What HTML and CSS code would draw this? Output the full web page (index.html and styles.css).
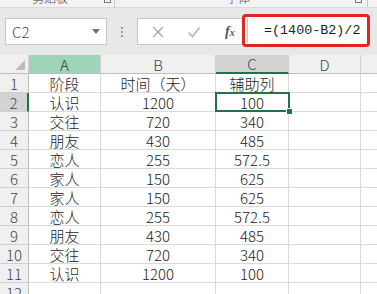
FILE: index.html
```html
<!DOCTYPE html>
<html lang="zh">
<head>
<meta charset="utf-8">
<title>Excel</title>
<link rel="stylesheet" href="styles.css">
</head>
<body>
<div class="ribbon">
  <span class="grp g1">剪贴板</span><span class="launch l1"></span><span class="sep s1"></span>
  <span class="grp g2">字体</span><span class="launch l2"></span><span class="sep s2"></span>
</div>
<div class="fbar">
  <div class="namebox"><span class="ref">C2</span><span class="tri"></span></div>
  <div class="dots"><i></i><i></i><i></i></div>
  <div class="tools">
    <svg class="ico" width="14" height="14" viewBox="0 0 14 14"><path d="M2 2 L12 12 M12 2 L2 12" stroke="#a8a8a8" stroke-width="1.4" fill="none"/></svg>
    <svg class="ico chk" width="14" height="14" viewBox="0 0 14 14"><path d="M1.5 7.5 L5.5 11.5 L12.5 2.5" stroke="#b4b4b4" stroke-width="1.6" fill="none"/></svg>
    <span class="fx"><i>f</i><i class="x">x</i></span>
  </div>
  <div class="input"><span class="formula">=(1400-B2)/2</span></div>
  <div class="rest"></div>
</div>
<div class="sheet">
  <div class="corner"><span class="selall"></span></div>
  <div class="ch hl-a">A</div><div class="ch">B</div><div class="ch sel">C</div><div class="ch">D</div><div class="ch last"></div>

  <div class="rh">1</div><div class="c">阶段</div><div class="c">时间（天）</div><div class="c">辅助列</div><div class="c"></div><div class="c last"></div>
  <div class="rh sel">2</div><div class="c">认识</div><div class="c">1200</div><div class="c">100</div><div class="c"></div><div class="c last"></div>
  <div class="rh">3</div><div class="c">交往</div><div class="c">720</div><div class="c">340</div><div class="c"></div><div class="c last"></div>
  <div class="rh">4</div><div class="c">朋友</div><div class="c">430</div><div class="c">485</div><div class="c"></div><div class="c last"></div>
  <div class="rh">5</div><div class="c">恋人</div><div class="c">255</div><div class="c">572.5</div><div class="c"></div><div class="c last"></div>
  <div class="rh">6</div><div class="c">家人</div><div class="c">150</div><div class="c">625</div><div class="c"></div><div class="c last"></div>
  <div class="rh">7</div><div class="c">家人</div><div class="c">150</div><div class="c">625</div><div class="c"></div><div class="c last"></div>
  <div class="rh">8</div><div class="c">恋人</div><div class="c">255</div><div class="c">572.5</div><div class="c"></div><div class="c last"></div>
  <div class="rh">9</div><div class="c">朋友</div><div class="c">430</div><div class="c">485</div><div class="c"></div><div class="c last"></div>
  <div class="rh">10</div><div class="c">交往</div><div class="c">720</div><div class="c">340</div><div class="c"></div><div class="c last"></div>
  <div class="rh">11</div><div class="c">认识</div><div class="c">1200</div><div class="c">100</div><div class="c"></div><div class="c last"></div>
  <div class="rh">12</div><div class="c"></div><div class="c"></div><div class="c"></div><div class="c"></div><div class="c last"></div>

  <div class="selbox"><span class="handle"></span></div>
</div>
</body>
</html>
```
FILE: styles.css
```css
html, body {
  margin: 0;
  padding: 0;
}
body {
  width: 377px;
  height: 294px;
  overflow: hidden;
  background: #ffffff;
  font-family: "Noto Sans CJK SC", "Noto Sans", sans-serif;
  font-weight: 300;
  color: #222;
}

/* ribbon remnant */
.ribbon {
  position: relative;
  height: 7px;
  background: #f3f3f3;
  border-bottom: 1px solid #dadada;
  overflow: hidden;
}
.grp {
  position: absolute;
  top: -10px;
  font-size: 12px;
  line-height: 16px;
  color: #444;
}
.g1 { left: 32px; }
.g2 { left: 226px; }
.launch {
  position: absolute;
  top: -4px;
  width: 5px;
  height: 6px;
  border: 1px solid #777;
  border-top: 0;
}
.l1 { left: 104px; }
.l2 { left: 355px; }
.sep {
  position: absolute;
  top: 0;
  width: 1px;
  height: 7px;
  background: #c8c8c8;
}
.s1 { left: 114px; }
.s2 { left: 367px; }

/* formula bar */
.fbar {
  height: 47px;
  background: #e8e8e8;
  display: flex;
  align-items: flex-start;
}
.namebox {
  margin: 10px 0 0 5px;
  width: 100px;
  height: 25px;
  background: #fff;
  border: 1px solid #c6c6c6;
  display: flex;
  align-items: center;
  justify-content: space-between;
}
.ref {
  margin-left: 6px;
  font-size: 15px;
  color: #444;
}
.tri {
  margin-right: 6px;
  width: 0;
  height: 0;
  border-left: 4px solid transparent;
  border-right: 4px solid transparent;
  border-top: 5px solid #707070;
}
.dots {
  width: 30px;
  margin-top: 19px;
  display: flex;
  flex-direction: column;
  align-items: center;
  gap: 2px;
}
.dots i {
  display: block;
  width: 2px;
  height: 2px;
  background: #a0a0a0;
}
.tools {
  margin-top: 10px;
  width: 104px;
  height: 25px;
  background: #fff;
  border: 1px solid #c6c6c6;
  border-right: 0;
  display: flex;
  align-items: center;
}
.ico { margin-left: 13px; }
.chk { margin-left: 22px; }
.fx {
  margin-left: 24px;
  font-family: "Liberation Serif", serif;
  color: #555;
  font-size: 14px;
  font-weight: bold;
}
.fx i { font-style: italic; }
.fx .x { font-size: 10px; }
.input {
  margin-top: 6px;
  width: 122px;
  height: 27px;
  background: #fff;
  border: 3px solid #e5231f;
  border-radius: 4px;
  display: flex;
  align-items: center;
  position: relative;
}
.input::before {
  content: "";
  position: absolute;
  left: 2px;
  top: 1px;
  bottom: 1px;
  width: 1px;
  background: #c8c8c8;
}
.formula {
  margin-left: 19px;
  font-family: "Liberation Mono", monospace;
  font-weight: normal;
  font-size: 13.4px;
  color: #222;
}
.rest {
  flex: 1;
}

/* sheet grid */
.sheet {
  position: relative;
  display: grid;
  grid-template-columns: 29px 72px 115px 73px 72px 1fr;
  grid-auto-rows: 19px;
  font-size: 15px;
}
.corner {
  position: relative;
  background: #f0f0f0;
  border-right: 1px solid #d0d0d0;
  border-bottom: 1px solid #bdbdbd;
}
.selall {
  position: absolute;
  right: 3px;
  bottom: 3px;
  width: 0;
  height: 0;
  border-left: 10px solid transparent;
  border-bottom: 10px solid #bdbdbd;
}
.ch {
  background: #f0f0f0;
  border-right: 1px solid #d0d0d0;
  border-bottom: 1px solid #bdbdbd;
  text-align: center;
  line-height: 19px;
  color: #444;
}
.ch.hl-a {
  background: #9fd5b7;
  color: #333;
}
.ch.sel {
  background: #d3d3d3;
  border-bottom: 2px solid #217346;
  line-height: 18px;
  color: #444;
}
.rh {
  background: #f0f0f0;
  border-right: 1px solid #bdbdbd;
  border-bottom: 1px solid #d0d0d0;
  text-align: center;
  line-height: 19px;
  color: #444;
}
.rh.sel {
  background: #d3d3d3;
  border-right: 2px solid #217346;
  color: #444;
}
.c {
  border-right: 1px solid #d9d9d9;
  border-bottom: 1px solid #d9d9d9;
  text-align: center;
  line-height: 19px;
  color: #222;
  white-space: nowrap;
}
.last {
  border-right: 0;
}
.selbox {
  position: absolute;
  left: 215px;
  top: 37px;
  width: 71px;
  height: 16px;
  border: 2px solid #217346;
}
.handle {
  position: absolute;
  right: -5px;
  bottom: -5px;
  width: 5px;
  height: 5px;
  background: #217346;
  border: 1px solid #fff;
}
```
